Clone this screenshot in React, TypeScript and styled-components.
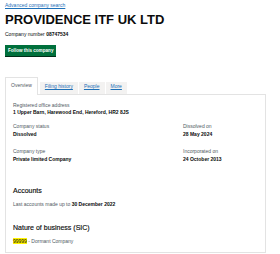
import React from 'react';
import styled, { createGlobalStyle } from 'styled-components';

const GlobalStyle = createGlobalStyle`
  html, body {
    margin: 0;
    padding: 0;
    background: #ffffff;
  }
  body {
    font-family: "Liberation Sans", Arial, sans-serif;
    color: #0b0c0c;
  }
`;

const Page = styled.div`
  width: 280px;
  height: 254px;
  padding: 0 5px;
  box-sizing: border-box;
  overflow: hidden;
`;

const BackLink = styled.a`
  display: block;
  font-size: 5px;
  line-height: 10px;
  color: #1d70b8;
  text-decoration: underline;
`;

const Title = styled.h1`
  margin: 3px 0 0;
  font-size: 13px;
  line-height: 13px;
  font-weight: 700;
  color: #0b0c0c;
`;

const CompanyNumber = styled.p`
  margin: 5px 0 0;
  font-size: 5px;
  line-height: 6px;
  color: #0b0c0c;

  strong {
    font-weight: 700;
  }
`;

const FollowButton = styled.button`
  display: block;
  margin-top: 8px;
  height: 11px;
  padding: 0 3px;
  border: 0;
  border-radius: 0;
  background: #00703c;
  box-shadow: 0 1px 0 #002d18;
  color: #ffffff;
  font-family: inherit;
  font-size: 4.6px;
  font-weight: 700;
  line-height: 11px;
`;

const Tabs = styled.div`
  display: flex;
  align-items: flex-end;
  gap: 1px;
  margin-top: 21px;
`;

const Tab = styled.a<{ $active?: boolean }>`
  display: block;
  position: relative;
  box-sizing: border-box;
  font-size: 5px;
  line-height: 7px;
  padding: ${(p) => (p.$active ? '4px 5px 6px' : '1px 5px 4px')};
  margin-right: ${(p) => (p.$active ? '1px' : '0')};
  margin-bottom: ${(p) => (p.$active ? '-1px' : '0')};
  background: ${(p) => (p.$active ? '#ffffff' : '#f3f2f1')};
  border: ${(p) => (p.$active ? '1px solid #e3e3e3' : '0')};
  border-bottom: 0;
  color: ${(p) => (p.$active ? '#505a5f' : '#1d70b8')};
  text-decoration: ${(p) => (p.$active ? 'none' : 'underline')};
  z-index: 1;
`;

const Panel = styled.div`
  width: 261px;
  height: 159px;
  box-sizing: border-box;
  border: 1px solid #e3e3e3;
  padding: 7px 7px 0;
`;

const Label = styled.p`
  margin: 0;
  font-size: 5px;
  line-height: 7px;
  color: #505a5f;
`;

const Value = styled.p<{ $gap?: number }>`
  margin: ${(p) => p.$gap ?? 0}px 0 0;
  font-size: 5px;
  line-height: 7px;
  font-weight: 700;
  color: #0b0c0c;
`;

const Grid = styled.div<{ $top: number }>`
  display: grid;
  grid-template-columns: 170px 1fr;
  margin-top: ${(p) => p.$top}px;
`;

const Heading = styled.h2<{ $top: number }>`
  margin: ${(p) => p.$top}px 0 0;
  font-size: 7px;
  line-height: 10px;
  font-weight: 400;
  color: #0b0c0c;
  -webkit-text-stroke: 0.15px #0b0c0c;
`;

const Body = styled.p`
  margin: 5px 0 0;
  font-size: 5px;
  line-height: 7px;
  color: #505a5f;

  strong {
    font-weight: 700;
    color: #0b0c0c;
  }
`;

const SicCode = styled.span`
  background: #fff200;
  color: #0b0c0c;
`;

const details = [
  [
    { label: 'Company status', value: 'Dissolved' },
    { label: 'Dissolved on', value: '28 May 2024' },
  ],
  [
    { label: 'Company type', value: 'Private limited Company' },
    { label: 'Incorporated on', value: '24 October 2013' },
  ],
];

export default function App() {
  return (
    <>
      <GlobalStyle />
      <Page>
        <BackLink href="#">Advanced company search</BackLink>
        <Title>PROVIDENCE ITF UK LTD</Title>
        <CompanyNumber>
          Company number <strong>08747534</strong>
        </CompanyNumber>
        <FollowButton>Follow this company</FollowButton>

        <Tabs>
          <Tab $active>Overview</Tab>
          <Tab href="#">Filing history</Tab>
          <Tab href="#">People</Tab>
          <Tab href="#">More</Tab>
        </Tabs>

        <Panel>
          <Label>Registered office address</Label>
          <Value>1 Upper Barn, Harewood End, Hereford, HR2 8JS</Value>

          {details.map((row, i) => (
            <Grid key={i} $top={i === 0 ? 7 : 10}>
              {row.map((d) => (
                <div key={d.label}>
                  <Label>{d.label}</Label>
                  <Value $gap={1}>{d.value}</Value>
                </div>
              ))}
            </Grid>
          ))}

          <Heading $top={23}>Accounts</Heading>
          <Body>
            Last accounts made up to <strong>30 December 2022</strong>
          </Body>

          <Heading $top={15}>Nature of business (SIC)</Heading>
          <Body>
            <SicCode>99999</SicCode> - Dormant Company
          </Body>
        </Panel>
      </Page>
    </>
  );
}
